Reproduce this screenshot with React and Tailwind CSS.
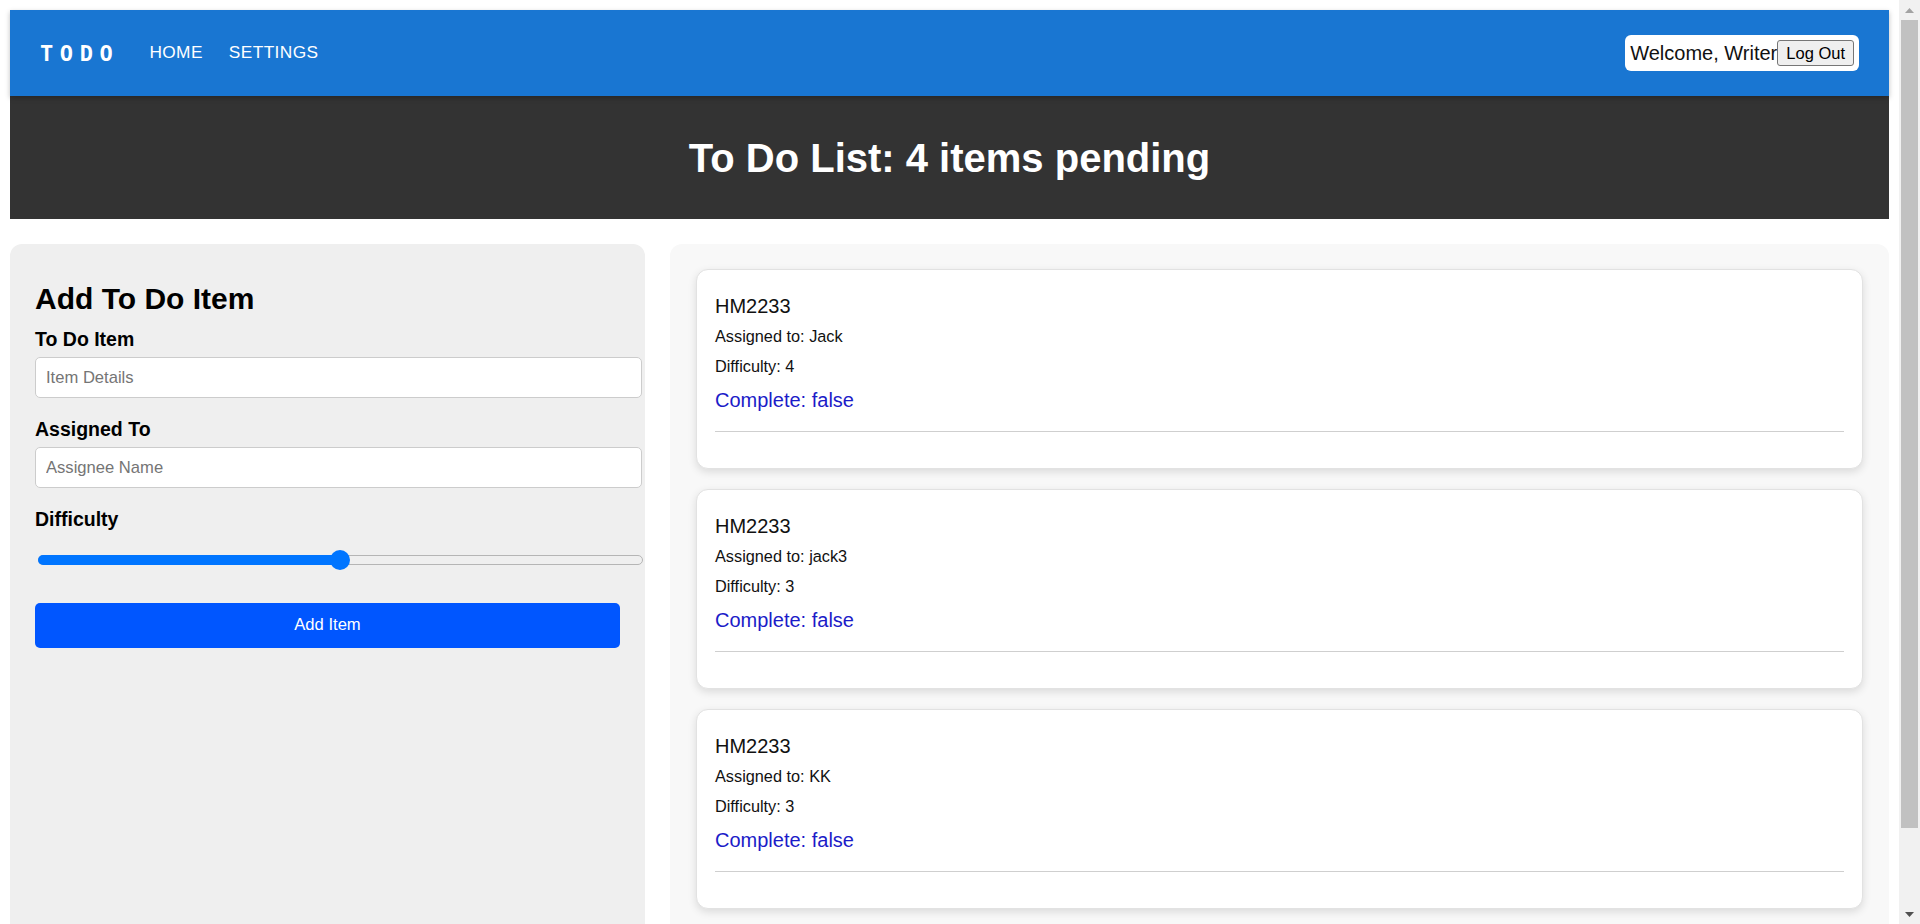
import React from "react";

const items = [
  { id: 1, text: "HM2233", assignee: "Jack", difficulty: 4 },
  { id: 2, text: "HM2233", assignee: "jack3", difficulty: 3 },
  { id: 3, text: "HM2233", assignee: "KK", difficulty: 3 },
];

function Card({ item }) {
  return (
    <div className="bg-white border border-[#e2e2e2] rounded-[12px] shadow-[0_3px_8px_rgba(0,0,0,0.12)] px-[18px] pt-[25px] pb-[36px]">
      <p className="text-[20px] leading-[23px] text-[#111]">{item.text}</p>
      <p className="mt-[9px] text-[16.3px] leading-[18px] text-[#111]">Assigned to: {item.assignee}</p>
      <p className="mt-[12px] text-[16.3px] leading-[18px] text-[#111]">Difficulty: {item.difficulty}</p>
      <p className="mt-[14px] text-[20px] leading-[23px] text-[#1c1cc8]">Complete: false</p>
      <div className="mt-[19px] h-px bg-[#cfcfcf]" />
    </div>
  );
}

export default function App() {
  return (
    <div className="flex h-screen overflow-hidden bg-white font-['Liberation_Sans',Arial,sans-serif]">
      <div className="flex-1 min-w-0 p-[10px]">
        {/* App bar */}
        <header className="h-[86px] bg-[#1976d2] shadow-[0_2px_5px_rgba(0,0,0,0.25)] flex items-center px-[30px] text-white relative z-10">
          <span className="font-['DejaVu_Sans_Mono',monospace] font-bold text-[22px] tracking-[6.6px] mr-[30px]">TODO</span>
          <nav className="flex items-center gap-[26px] text-[17.3px] tracking-[0.4px] uppercase">
            <span>HOME</span>
            <span>SETTINGS</span>
          </nav>
          <div className="ml-auto bg-white rounded-[6px] h-[36px] flex items-center pl-[5px] pr-[5px]">
            <span className="text-[20px] text-[#111]">Welcome, Writer</span>
            <button className="h-[26px] px-[8px] bg-[#efefef] border border-[#767676] rounded-[3px] text-[16.5px] text-black leading-none">
              Log Out
            </button>
          </div>
        </header>

        {/* Banner */}
        <div className="h-[123px] bg-[#333333] flex items-center justify-center">
          <h1 className="text-white font-bold text-[40px] leading-none">To Do List: 4 items pending</h1>
        </div>

        {/* Panels */}
        <div className="mt-[25px] flex gap-[25px]">
          <section className="w-[635px] h-[764px] shrink-0 bg-[#efefef] rounded-t-[12px] pl-[25px] pr-[25px] pt-[38px]">
            <h2 className="text-[30px] leading-[34px] font-bold text-black">Add To Do Item</h2>
            <label className="block mt-[12px] text-[19.5px] leading-[22px] font-bold text-black">To Do Item</label>
            <input
              type="text"
              placeholder="Item Details"
              className="block mt-[7px] w-[607px] h-[41px] bg-white border border-[#cccccc] rounded-[5px] px-[10px] text-[16.6px] placeholder:text-[#757575] outline-none"
            />
            <label className="block mt-[20px] text-[19.5px] leading-[22px] font-bold text-black">Assigned To</label>
            <input
              type="text"
              placeholder="Assignee Name"
              className="block mt-[7px] w-[607px] h-[41px] bg-white border border-[#cccccc] rounded-[5px] px-[10px] text-[16.6px] placeholder:text-[#757575] outline-none"
            />
            <label className="block mt-[20px] text-[19.5px] leading-[22px] font-bold text-black">Difficulty</label>
            {/* Slider */}
            <div className="relative mt-[20px] ml-[3px] w-[605px] h-[20px] flex items-center">
              <div className="absolute left-0 right-0 h-[10px] rounded-full border border-[#b5b5b5] bg-[#efefef]" />
              <div className="absolute left-0 w-[300px] h-[10px] rounded-full bg-[#0075ff]" />
              <div className="absolute left-[292px] w-[20px] h-[20px] rounded-full bg-[#0075ff]" />
            </div>
            <button className="mt-[33px] w-[585px] h-[45px] bg-[#0056ff] rounded-[5px] text-white text-[16.6px]">
              Add Item
            </button>
          </section>

          <section className="flex-1 min-w-0 h-[764px] bg-[#f8f8f8] rounded-t-[12px] px-[26px] pt-[25px] flex flex-col gap-[20px]">
            {items.map((it) => (
              <Card key={it.id} item={it} />
            ))}
          </section>
        </div>
      </div>

      {/* Scrollbar */}
      <div className="w-[21px] shrink-0 bg-[#f1f1f1] flex flex-col items-center">
        <div className="h-[20px] flex items-center justify-center">
          <svg width="9" height="5" viewBox="0 0 9 5"><path d="M0 5 L4.5 0 L9 5 Z" fill="#a3a3a3" /></svg>
        </div>
        <div className="w-[17px] h-[808px] bg-[#c1c1c1]" />
        <div className="flex-1" />
        <div className="h-[20px] flex items-center justify-center">
          <svg width="9" height="5" viewBox="0 0 9 5"><path d="M0 0 L9 0 L4.5 5 Z" fill="#505050" /></svg>
        </div>
      </div>
    </div>
  );
}
